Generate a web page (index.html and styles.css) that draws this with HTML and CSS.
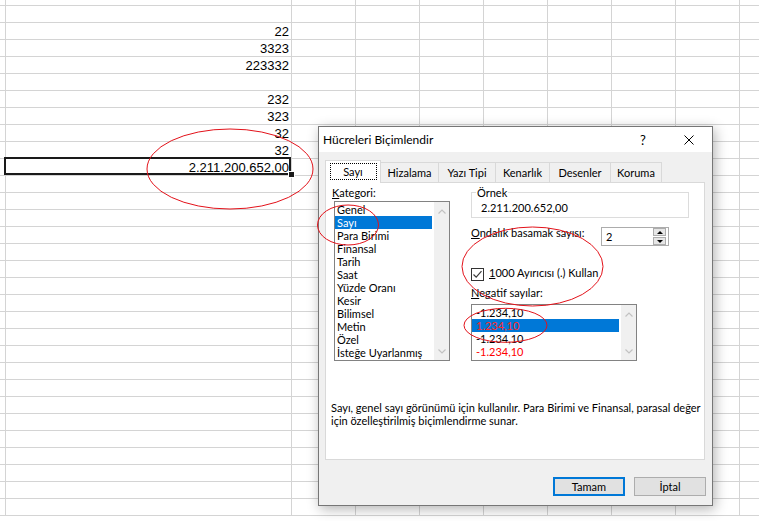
FILE: index.html
```html
<!DOCTYPE html>
<html lang="tr">
<head>
    <meta charset="UTF-8">
    <title>Hücreleri Biçimlendir</title>
    <link rel="stylesheet" href="styles.css">
    <script>
        // column A values, by row (row 0 is the thin partial row at the top)
        const cellValues = ['', '', '22', '3323', '223332', '', '232', '323', '32', '32', '2.211.200.652,00'];
        const selectedRow = 10;
        const rowCount = 31;
        const extraColumns = 8;

        function buildSheet() {
            const sheet = document.getElementById('sheet');
            for (let r = 0; r < rowCount; r++) {
                const row = document.createElement('div');
                row.className = r === 0 ? 'row first' : 'row';

                const edge = document.createElement('div');
                edge.className = 'cell edge';
                row.appendChild(edge);

                const wide = document.createElement('div');
                wide.className = r === selectedRow ? 'cell wide selected' : 'cell wide';
                wide.textContent = cellValues[r] || '';
                row.appendChild(wide);

                for (let c = 0; c < extraColumns; c++) {
                    const cell = document.createElement('div');
                    cell.className = c === extraColumns - 1 ? 'cell last' : 'cell';
                    row.appendChild(cell);
                }
                sheet.appendChild(row);
            }
        }

        window.onload = buildSheet;
    </script>
</head>
<body>
    <div class="sheet" id="sheet"></div>

    <div class="dialog">
        <div class="titlebar">
            <span class="title">Hücreleri Biçimlendir</span>
            <span class="help">?</span>
            <span class="close">
                <svg width="10" height="10" viewBox="0 0 10 10"><path d="M0.5 0.5 L9.5 9.5 M9.5 0.5 L0.5 9.5" stroke="#000" stroke-width="1" fill="none"/></svg>
            </span>
        </div>
        <div class="dlg-body">
            <div class="tabs">
                <div class="tab active">Sayı</div>
                <div class="tab">Hizalama</div>
                <div class="tab">Yazı Tipi</div>
                <div class="tab">Kenarlık</div>
                <div class="tab">Desenler</div>
                <div class="tab">Koruma</div>
            </div>
            <div class="panel">
                <div class="panel-main">
                    <div class="col-left">
                        <div class="label"><u>K</u>ategori:</div>
                        <div class="listbox cat-list">
                            <ul class="items">
                                <li>Genel</li>
                                <li class="sel">Sayı</li>
                                <li>Para Birimi</li>
                                <li>Finansal</li>
                                <li>Tarih</li>
                                <li>Saat</li>
                                <li>Yüzde Oranı</li>
                                <li>Kesir</li>
                                <li>Bilimsel</li>
                                <li>Metin</li>
                                <li>Özel</li>
                                <li>İsteğe Uyarlanmış</li>
                            </ul>
                            <div class="vscroll">
                                <svg width="8" height="5" viewBox="0 0 8 5"><polyline points="0.5,4.5 4,1 7.5,4.5" fill="none" stroke="#c2c2c2" stroke-width="1.2"/></svg>
                                <svg width="8" height="5" viewBox="0 0 8 5"><polyline points="0.5,0.5 4,4 7.5,0.5" fill="none" stroke="#c2c2c2" stroke-width="1.2"/></svg>
                            </div>
                        </div>
                    </div>
                    <div class="col-right">
                        <fieldset class="sample">
                            <legend>Örnek</legend>
                            <div class="sample-value">2.211.200.652,00</div>
                        </fieldset>
                        <div class="decimals">
                            <div class="label decimals-label"><u>O</u>ndalık basamak sayısı:</div>
                            <div class="spin">
                                <div class="spin-value">2</div>
                                <div class="spin-btns">
                                    <div class="spin-btn"><span class="arrow-up"></span></div>
                                    <div class="spin-btn"><span class="arrow-down"></span></div>
                                </div>
                            </div>
                        </div>
                        <div class="check-row">
                            <span class="check">
                                <svg width="11" height="11" viewBox="0 0 11 11"><polyline points="1.5,5.5 4.2,8.2 9.5,2.2" fill="none" stroke="#3c3c3c" stroke-width="1.2"/></svg>
                            </span>
                            <span class="label"><u>1</u>000 Ayırıcısı (.) Kullan</span>
                        </div>
                        <div class="label neg-label"><u>N</u>egatif sayılar:</div>
                        <div class="listbox neg-list">
                            <ul class="items">
                                <li>-1.234,10</li>
                                <li class="sel red">1.234,10</li>
                                <li>-1.234,10</li>
                                <li class="red">-1.234,10</li>
                            </ul>
                            <div class="vscroll">
                                <svg width="8" height="5" viewBox="0 0 8 5"><polyline points="0.5,4.5 4,1 7.5,4.5" fill="none" stroke="#c2c2c2" stroke-width="1.2"/></svg>
                                <svg width="8" height="5" viewBox="0 0 8 5"><polyline points="0.5,0.5 4,4 7.5,0.5" fill="none" stroke="#c2c2c2" stroke-width="1.2"/></svg>
                            </div>
                        </div>
                    </div>
                </div>
                <p class="desc">Sayı, genel sayı görünümü için kullanılır. Para Birimi ve Finansal, parasal değer için özelleştirilmiş biçimlendirme sunar.</p>
            </div>
            <div class="buttons">
                <div class="btn primary">Tamam</div>
                <div class="btn">İptal</div>
            </div>
        </div>
    </div>

    <!-- hand drawn red circles -->
    <svg class="marks" width="759" height="521" viewBox="0 0 759 521">
        <ellipse cx="230" cy="169" rx="83" ry="40"/>
        <ellipse cx="348" cy="225" rx="30.5" ry="20"/>
        <ellipse cx="532.5" cy="266.5" rx="70.5" ry="39.5"/>
        <ellipse cx="505.5" cy="325.3" rx="41.5" ry="17"/>
    </svg>
</body>
</html>
```

FILE: styles.css
```css
/* Page */
body {
    margin: 0;
    width: 759px;
    height: 521px;
    overflow: hidden;
    position: relative;
    background: #fff;
    font-family: "Liberation Sans", Arial, sans-serif;
    color: #000;
}

/* Spreadsheet grid */
.sheet {
    display: flex;
    flex-direction: column;
    width: 759px;
    height: 521px;
    overflow: hidden;
}
.row {
    display: flex;
    flex: none;
    height: 17px;
}
.row.first {
    height: 6px;
}
.cell {
    flex: none;
    width: 64px;
    box-sizing: border-box;
    border-right: 1px solid #d4d4d4;
    border-bottom: 1px solid #d4d4d4;
    font-size: 13px;
    line-height: 15px;
    padding: 1px 2px 0 0;
    text-align: right;
    white-space: nowrap;
    position: relative;
}
.cell.edge {
    width: 6px;
    padding: 0;
}
.cell.wide {
    width: 286px;
}
.cell.last {
    flex: 1;
    width: auto;
    min-width: 0;
    border-right: none;
}
.cell.selected::after {
    content: "";
    position: absolute;
    top: -2px;
    left: -2px;
    right: 0;
    bottom: 0;
    border: 2px solid #1a1a1a;
}
.cell.selected::before {
    content: "";
    position: absolute;
    right: -4px;
    bottom: -3px;
    width: 5px;
    height: 5px;
    background: #1a1a1a;
    border: 1px solid #fff;
    z-index: 1;
}

/* Dialog */
.dialog {
    position: absolute;
    left: 318px;
    top: 126px;
    width: 395px;
    height: 380px;
    box-sizing: border-box;
    border: 1px solid #767676;
    background: #f0f0f0;
    box-shadow: 2px 3px 12px rgba(0, 0, 0, 0.3);
    font-family: Lato, "Noto Sans", sans-serif;
    font-size: 11px;
    color: #000;
}
.titlebar {
    display: flex;
    align-items: center;
    height: 25px;
    background: #fff;
    font-size: 12px;
}
.title {
    flex: 1;
    padding-left: 4px;
}
.help {
    width: 46px;
    text-align: center;
    font-size: 13px;
}
.close {
    width: 46px;
    display: flex;
    justify-content: center;
}
.dlg-body {
    padding: 8px 7px 0 6px;
}

/* Tabs */
.tabs {
    display: flex;
    align-items: flex-end;
    height: 22px;
    position: relative;
    z-index: 1;
}
.tab {
    height: 20px;
    box-sizing: border-box;
    border: 1px solid #d9d9d9;
    border-bottom: none;
    margin-left: -1px;
    line-height: 19px;
    text-align: center;
    background: #f0f0f0;
}
.tab:nth-child(1) { width: 56px; margin-left: 0; }
.tab:nth-child(2) { width: 59px; }
.tab:nth-child(3) { width: 58px; }
.tab:nth-child(4) { width: 55px; }
.tab:nth-child(5) { width: 62px; }
.tab:nth-child(6) { width: 52px; }
.tab.active {
    height: 23px;
    margin-bottom: -1px;
    padding-top: 1px;
    line-height: 20px;
    background: #fff;
    position: relative;
}
.tab.active::after {
    content: "";
    position: absolute;
    left: 4px;
    right: 3px;
    top: 2px;
    bottom: 3px;
    border: 1px dotted #000;
}

/* Panel */
.panel {
    height: 278px;
    box-sizing: border-box;
    border: 1px solid #d9d9d9;
    background: #fff;
}
.panel-main {
    display: flex;
    padding: 2px 0 0 6px;
}
.label {
    line-height: 15px;
    white-space: nowrap;
}
.col-left {
    width: 118px;
}
.col-right {
    margin-left: 21px;
}

/* List boxes */
.listbox {
    display: flex;
    box-sizing: border-box;
    border: 1px solid #828282;
    background: #fff;
}
.cat-list {
    width: 116px;
    height: 160px;
    margin: 1px 0 0 2px;
}
.neg-list {
    width: 166px;
    height: 57px;
    margin-top: 4px;
}
.items {
    flex: 1;
    list-style: none;
    margin: 0 2px 0 0;
    padding: 1px 0 0 0;
}
.items li {
    height: 13px;
    line-height: 13px;
    padding-left: 2px;
    white-space: nowrap;
    overflow: hidden;
}
.neg-list .items li {
    padding-left: 4px;
}
.items li.sel {
    background: #0078d7;
    color: #fff;
}
.items li.red {
    color: #ff0000;
}
.items li.sel.red {
    color: #ff2a2a;
}
.vscroll {
    width: 15px;
    flex: none;
    box-sizing: border-box;
    padding: 7px 0 6px;
    background: #f0f0f0;
    display: flex;
    flex-direction: column;
    justify-content: space-between;
    align-items: center;
}

/* Sample group */
.sample {
    width: 218px;
    box-sizing: border-box;
    margin: 0;
    padding: 0 4px 2px;
    border: 1px solid #dcdcdc;
}
.sample legend {
    padding: 0 1px;
    line-height: 15px;
}
.sample-value {
    line-height: 15px;
    padding-left: 5px;
}

/* Decimal places */
.decimals {
    display: flex;
    align-items: flex-start;
    margin-top: 7px;
}
.decimals-label {
    width: 130px;
}
.spin {
    display: flex;
    width: 68px;
    height: 19px;
    margin-top: 2px;
    box-sizing: border-box;
    border: 1px solid #acacac;
    background: #fff;
}
.spin-value {
    flex: 1;
    padding-left: 4px;
    line-height: 17px;
}
.spin-btns {
    display: flex;
    flex-direction: column;
    gap: 1px;
    width: 13px;
    margin-right: 2px;
}
.spin-btn {
    height: 8px;
    box-sizing: border-box;
    border: 1px solid #adadad;
    background: #e6e6e6;
    display: flex;
    align-items: center;
    justify-content: center;
}
.arrow-up {
    width: 0;
    height: 0;
    border-left: 3px solid transparent;
    border-right: 3px solid transparent;
    border-bottom: 3px solid #000;
}
.arrow-down {
    width: 0;
    height: 0;
    border-left: 3px solid transparent;
    border-right: 3px solid transparent;
    border-top: 3px solid #000;
}

/* Checkbox */
.check-row {
    display: flex;
    align-items: flex-start;
    margin-top: 19px;
}
.check {
    width: 13px;
    height: 13px;
    margin-top: 3px;
    margin-right: 5px;
    box-sizing: border-box;
    border: 1px solid #333;
    background: #fff;
    display: flex;
}
.neg-label {
    margin-top: 4px;
}

/* Description */
.desc {
    margin: 40px 0 0 5px;
    width: 372px;
    line-height: 13px;
}

/* Buttons */
.buttons {
    display: flex;
    justify-content: flex-end;
    gap: 9px;
    margin: 17px -1px 0 0;
}
.btn {
    width: 72px;
    height: 19px;
    box-sizing: border-box;
    border: 1px solid #adadad;
    background: #e1e1e1;
    text-align: center;
    line-height: 17px;
}
.btn.primary {
    border: 2px solid #0078d7;
    line-height: 15px;
}

/* Red annotation circles */
.marks {
    position: absolute;
    left: 0;
    top: 0;
    pointer-events: none;
}
.marks ellipse {
    fill: none;
    stroke: #e3121a;
    stroke-width: 1;
}
```
